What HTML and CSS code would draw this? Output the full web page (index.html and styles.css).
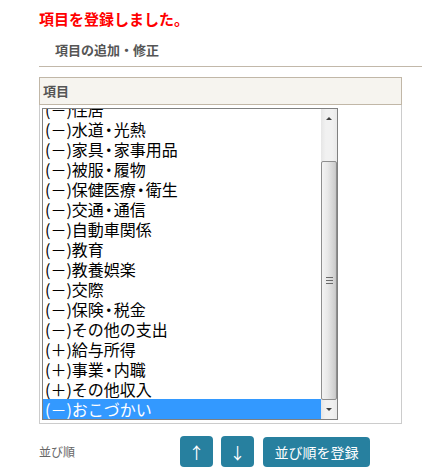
FILE: index.html
```html
<!DOCTYPE html>
<html lang="ja">
<head>
<meta charset="utf-8">
<title>項目の追加・修正</title>
<link rel="stylesheet" href="styles.css">
</head>
<body>
<div class="page">
  <p class="msg">項目を登録しました。</p>
  <h2 class="section">項目の追加・修正</h2>
  <div class="panel">
    <div class="panel-head">項目</div>
    <div class="panel-body">
      <div class="listbox">
        <div class="options">
          <div class="opt">(－)住居</div>
          <div class="opt">(－)水道<span class="dot">・</span>光熱</div>
          <div class="opt">(－)家具<span class="dot">・</span>家事用品</div>
          <div class="opt">(－)被服<span class="dot">・</span>履物</div>
          <div class="opt">(－)保健医療<span class="dot">・</span>衛生</div>
          <div class="opt">(－)交通<span class="dot">・</span>通信</div>
          <div class="opt">(－)自動車関係</div>
          <div class="opt">(－)教育</div>
          <div class="opt">(－)教養娯楽</div>
          <div class="opt">(－)交際</div>
          <div class="opt">(－)保険<span class="dot">・</span>税金</div>
          <div class="opt">(－)その他の支出</div>
          <div class="opt">(＋)給与所得</div>
          <div class="opt">(＋)事業<span class="dot">・</span>内職</div>
          <div class="opt">(＋)その他収入</div>
          <div class="opt selected">(－)おこづかい</div>
        </div>
        <div class="sbar">
          <div class="sb-up"><span class="tri-up"></span></div>
          <div class="sb-thumb"><span class="grip"></span></div>
          <div class="sb-down"><span class="tri-down"></span></div>
        </div>
      </div>
    </div>
  </div>
  <div class="order">
    <span class="order-label">並び順</span>
    <button class="btn btn-arrow" type="button">↑</button>
    <button class="btn btn-arrow" type="button">↓</button>
    <button class="btn btn-save" type="button">並び順を登録</button>
  </div>
</div>
</body>
</html>
```

FILE: styles.css
```css
html, body {
  margin: 0;
  padding: 0;
  background: #ffffff;
}

body {
  font-family: "Noto Sans CJK JP", "Noto Sans", sans-serif;
  color: #000;
}

.page {
  padding-left: 39px;
}

.msg {
  margin: 0;
  padding: 10px 0 8px 0;
  font-size: 15px;
  line-height: 18px;
  font-weight: bold;
  color: #ff0000;
}

.section {
  margin: 0;
  padding: 6px 0 8px 16px;
  font-size: 13px;
  line-height: 16px;
  font-weight: bold;
  color: #555555;
  border-bottom: 1px solid #c2b8aa;
}

.panel {
  margin-top: 10px;
  width: 363px;
}

.panel-head {
  height: 26px;
  line-height: 26px;
  padding-left: 3px;
  border: 1px solid #c1b7a7;
  background: #f6f4ef;
  font-size: 13px;
  font-weight: bold;
  color: #555555;
}

.panel-body {
  border: 1px solid #cccccc;
  border-top: none;
  padding: 3px 2px;
}

.listbox {
  display: flex;
  width: 294px;
  height: 310px;
  border: 1px solid #808080;
  background: #ffffff;
  overflow: hidden;
}

.options {
  flex: 1;
  margin-top: -10px;
}

.opt {
  height: 20px;
  line-height: 20px;
  padding-left: 2px;
  font-size: 16px;
  white-space: nowrap;
  color: #000;
}

.dot {
  font-feature-settings: "halt";
  margin: 0 1px;
}

.opt.selected {
  background: #3399ff;
  color: #ffffff;
}

.sbar {
  width: 16px;
  display: flex;
  flex-direction: column;
  background: linear-gradient(to right, #e6e6e6, #f1f1f1 30%, #f1f1f1 70%, #e9e9e9);
}

.sb-up {
  height: 52px;
  display: flex;
  justify-content: center;
  padding-top: 8px;
  box-sizing: border-box;
}

.tri-up {
  width: 0;
  height: 0;
  border-left: 3px solid transparent;
  border-right: 3px solid transparent;
  border-bottom: 3px solid #404040;
}

.sb-thumb {
  flex: 1;
  border: 1px solid #8e8e8e;
  border-radius: 2px;
  background: linear-gradient(to right, #f3f3f3, #e8e8e8 40%, #cfcfcf 90%, #c4c4c4);
  display: flex;
  align-items: center;
  justify-content: center;
}

.grip {
  width: 7px;
  height: 7px;
  background: repeating-linear-gradient(to bottom, #6a6a6a 0, #6a6a6a 1px, transparent 1px, transparent 3px);
}

.sb-down {
  height: 19px;
  display: flex;
  justify-content: center;
  align-items: center;
}

.tri-down {
  width: 0;
  height: 0;
  border-left: 3px solid transparent;
  border-right: 3px solid transparent;
  border-top: 3px solid #404040;
}

.order {
  display: flex;
  align-items: center;
  margin-top: 12px;
}

.order-label {
  width: 141px;
  font-size: 12px;
  color: #666666;
  line-height: 31px;
}

.btn {
  height: 31px;
  margin-right: 8px;
  border: none;
  border-radius: 4px;
  background: #27809f;
  color: #ffffff;
  font-family: "Noto Sans CJK JP", "Noto Sans", sans-serif;
  font-size: 14px;
  padding: 0;
  cursor: pointer;
}

.btn-arrow {
  width: 33px;
  font-size: 16px;
}

.btn-save {
  width: 107px;
  height: 30px;
  margin-top: 1px;
  margin-left: 1px;
}
```
